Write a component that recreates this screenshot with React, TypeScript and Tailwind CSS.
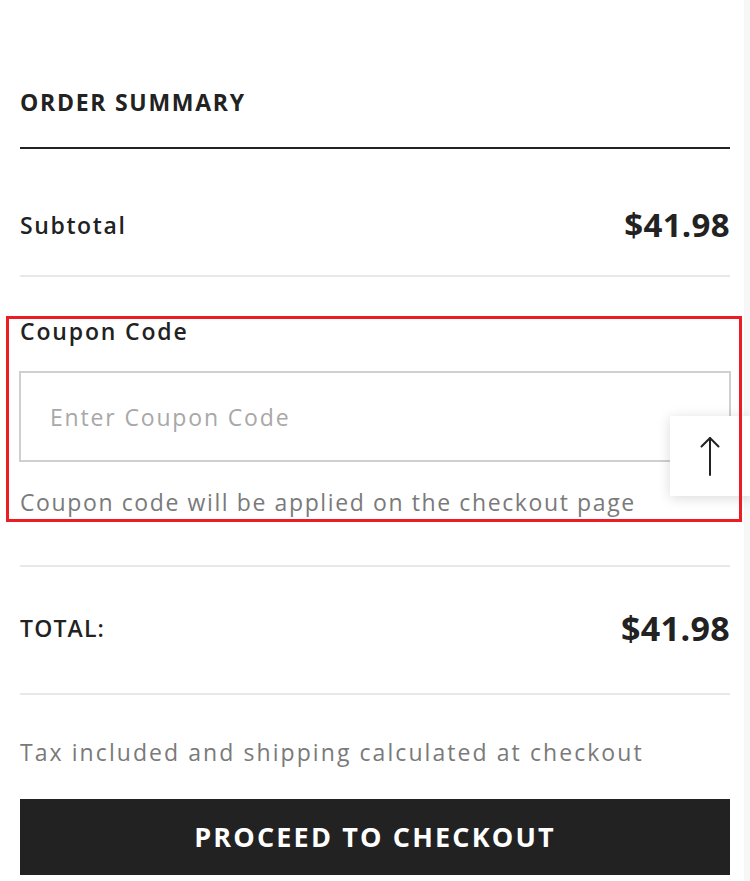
export default function App() {
    return (
        <div className="relative w-[750px] min-h-[881px] bg-white text-[#222] overflow-hidden" style={{ fontFamily: '"Open Sans", "Liberation Sans", sans-serif' }}>
            <div className="absolute top-0 right-0 bottom-0 w-[6px] bg-[#f7f7f7]" />

            <div className="px-5">
                {/* Header */}
                <div className="pt-[84px] pb-[27px] border-b-2 border-[#222]">
                    <h2 className="text-[23px] leading-[36px] font-bold tracking-[0.075em] uppercase">Order Summary</h2>
                </div>

                {/* Subtotal */}
                <div className="flex items-center justify-between h-[128px] pt-[57px] pb-[31px] border-b-2 border-[#e8e8e8]">
                    <span className="text-[23px] leading-[40px] font-semibold tracking-[0.07em]">Subtotal</span>
                    <span className="text-[33px] leading-[40px] font-bold tracking-[0.01em]">$41.98</span>
                </div>

                {/* Coupon */}
                <div className="relative mt-[39px] pt-[1px] pb-[6px]">
                    <span className="pointer-events-none absolute -left-[14px] -right-[12px] top-0 bottom-0 border-[3px] border-[#ed1c24] z-20" />
                    <label className="block text-[23px] leading-[28px] font-semibold tracking-[0.08em]">Coupon Code</label>
                    <input
                        type="text"
                        placeholder="Enter Coupon Code"
                        className="mt-[26px] block w-[712px] -ml-px h-[91px] border-2 border-[#cfcfcf] px-[29px] text-[23px] tracking-[0.08em] text-[#222] placeholder:text-[#a8a8a8] outline-none"
                    />
                    <p className="mt-[26px] text-[23px] leading-[28px] tracking-[0.07em] text-[#7a7a7a]">Coupon code will be applied on the checkout page</p>
                </div>

                {/* Total */}
                <div className="mt-[43px] border-t-2 border-[#e8e8e8]">
                    <div className="flex items-center justify-between pt-[41px] pb-[45px] border-b-2 border-[#e8e8e8]">
                        <span className="text-[23px] leading-[40px] font-semibold tracking-[0.05em] uppercase">Total:</span>
                        <span className="text-[34px] leading-[40px] font-bold tracking-[0.01em]">$41.98</span>
                    </div>
                </div>

                <p className="pt-[43px] text-[23px] leading-[28px] tracking-[0.09em] text-[#7a7a7a]">Tax included and shipping calculated at checkout</p>

                <button className="mt-[33px] w-full h-[76px] bg-[#222] text-white text-[27px] font-bold tracking-[0.08em] uppercase">
                    Proceed to Checkout
                </button>
            </div>

            {/* Scroll to top */}
            <button className="absolute left-[670px] top-[416px] w-[80px] h-[80px] bg-white shadow-[0_2px_12px_rgba(0,0,0,0.15)] flex items-center justify-center z-10">
                <svg width="20" height="40" viewBox="0 0 20 40" fill="none" stroke="#222" strokeWidth="2" strokeLinecap="round" strokeLinejoin="round">
                    <path d="M10 39V2" />
                    <path d="M1.5 10.5L10 2l8.5 8.5" />
                </svg>
            </button>
        </div>
    );
}
